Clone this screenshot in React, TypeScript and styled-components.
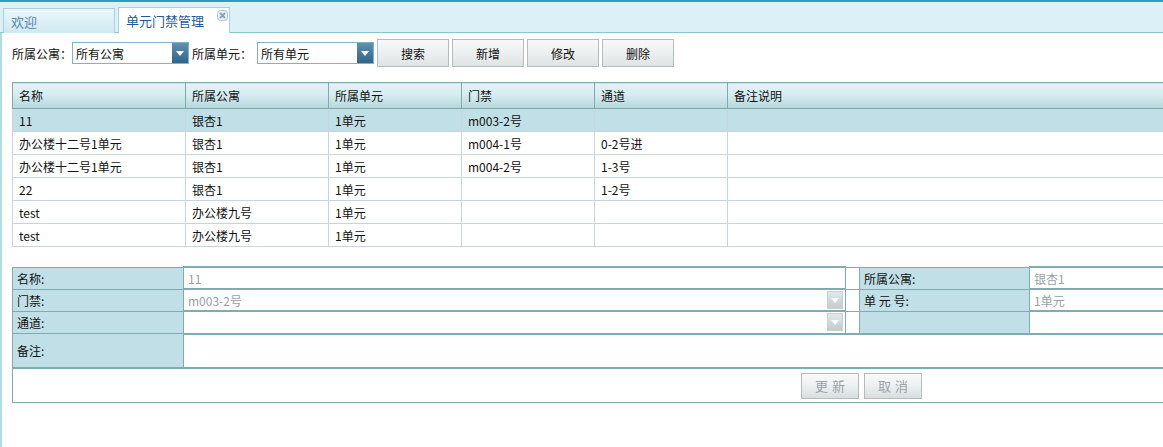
import React from "react";
import styled, { createGlobalStyle, css } from "styled-components";

const GlobalStyle = createGlobalStyle`
  html, body {
    margin: 0;
    padding: 0;
    background: #ffffff;
    overflow: hidden;
  }
  body {
    font-family: "Noto Sans CJK SC", "DejaVu Sans", sans-serif;
    font-size: 12px;
    color: #111;
  }
`;

const Root = styled.div`
  width: 1163px;
  height: 447px;
  overflow: hidden;
  border-top: 2px solid #2f9cc0;
  box-sizing: border-box;
`;

const TabStrip = styled.div`
  display: flex;
  align-items: flex-end;
  gap: 3px;
  height: 31px;
  padding-left: 3px;
  background: #dcf0f7;
  border-bottom: 1px solid #8ec4d0;
  box-sizing: border-box;
`;

const Tab = styled.div<{ active?: boolean }>`
  position: relative;
  width: 112px;
  height: 25px;
  box-sizing: border-box;
  padding: 5px 0 0 7px;
  border: 1px solid #a6d2dc;
  border-bottom: none;
  font-size: 13px;
  line-height: 16px;
  color: #5a86b0;
  background: linear-gradient(#eaf7fb, #cfe9f1);
  margin-bottom: -1px;
  ${(p) =>
    p.active &&
    css`
      height: 26px;
      background: #ffffff;
      color: #1f5a96;
    `}
`;

const CloseIcon = styled.svg`
  position: absolute;
  top: 2px;
  right: 1px;
`;

const Body = styled.div`
  border-left: 2px solid #b4dbe4;
  padding: 6px 0 0 10px;
  height: 420px;
  box-sizing: border-box;
`;

const Toolbar = styled.div`
  display: flex;
  align-items: center;
  height: 28px;
`;

const FilterLabel = styled.span<{ w: number }>`
  width: ${(p) => p.w}px;
  white-space: nowrap;
`;

const SelectBox = styled.div`
  display: flex;
  align-items: center;
  width: 117px;
  height: 22px;
  box-sizing: border-box;
  border: 1px solid #7fb3c4;
  margin-right: 3px;
  background: #fff;
`;

const SelectText = styled.span`
  flex: 1;
  padding-left: 3px;
`;

const SelectArrow = styled.span`
  display: flex;
  align-items: center;
  justify-content: center;
  width: 16px;
  height: 20px;
  background: linear-gradient(#5f91b0, #2f6588);
`;

const ToolButton = styled.button`
  width: 72px;
  height: 28px;
  margin-right: 3px;
  border: 1px solid #b4bcbe;
  background: linear-gradient(#f8fafa, #dfe4e4);
  font-family: inherit;
  font-size: 12px;
  color: #111;
  padding: 0;
`;

const GridTable = styled.table`
  margin-top: 15px;
  width: 1170px;
  border-collapse: collapse;
  table-layout: fixed;
  border: 1px solid #80aaaa;
`;

const HeadCell = styled.th`
  height: 25px;
  text-align: left;
  font-weight: normal;
  padding: 0 6px;
  background: linear-gradient(#e2f3f6 0%, #d6edf1 45%, #b4d7dd 100%);
  border: 1px solid #80aaaa;
  border-top: none;
`;

const Row = styled.tr<{ selected?: boolean }>`
  background: ${(p) => (p.selected ? "#c0dfe6" : "#ffffff")};
`;

const Cell = styled.td`
  height: 22px;
  padding: 0 6px;
  border: 1px solid #c6d6dc;
  white-space: nowrap;
  overflow: hidden;
`;

const FormTable = styled.table`
  margin-top: 19px;
  width: 1180px;
  border-collapse: collapse;
  table-layout: fixed;
  border: 1px solid #80acb0;
`;

const LabelCell = styled.td<{ tall?: boolean }>`
  height: ${(p) => (p.tall ? 33 : 21)}px;
  padding: 0 4px;
  background: #c0dfe6;
  border: 1px solid #80acb0;
  white-space: nowrap;
`;

const InputCell = styled.td`
  padding: 0;
  border: 1px solid #80acb0;
  border-top-width: 2px;
  border-bottom-width: 2px;
`;

const GapCell = styled.td`
  padding: 0;
  border-top: 1px solid #80acb0;
  border-bottom: 1px solid #80acb0;
`;

const Field = styled.div<{ tall?: boolean }>`
  display: flex;
  align-items: center;
  height: ${(p) => (p.tall ? 32 : 20)}px;
  padding-left: 4px;
  color: #9aa0a4;
  font-size: 12px;
`;

const FieldText = styled.span`
  flex: 1;
`;

const FieldArrow = styled.span`
  display: flex;
  align-items: center;
  justify-content: center;
  width: 14px;
  height: 16px;
  margin-right: 2px;
  background: linear-gradient(#e3e8ea, #c4cbce);
  border: 1px solid #c8d0d3;
`;

const ActionCell = styled.td`
  height: 33px;
  padding: 0;
  border-top: 2px solid #80acb0;
`;

const ActionBar = styled.div`
  display: flex;
  gap: 5px;
  padding-left: 788px;
`;

const ActionButton = styled.button`
  width: 58px;
  height: 26px;
  border: 1px solid #b4bcbe;
  background: linear-gradient(#f8fafa 0%, #f0f3f3 40%, #d8dede 100%);
  font-family: inherit;
  font-size: 13px;
  letter-spacing: 4px;
  padding: 0 0 0 4px;
  color: #9aa2a6;
`;

const Arrow: React.FC<{ color: string }> = ({ color }) => (
  <svg width="8" height="5" viewBox="0 0 8 5">
    <path d="M0 0h8L4 5z" fill={color} />
  </svg>
);

const columns = [
  { title: "名称", width: 173 },
  { title: "所属公寓", width: 143 },
  { title: "所属单元", width: 133 },
  { title: "门禁", width: 133 },
  { title: "通道", width: 133 },
  { title: "备注说明", width: undefined },
];

const rows = [
  ["11", "银杏1", "1单元", "m003-2号", "", ""],
  ["办公楼十二号1单元", "银杏1", "1单元", "m004-1号", "0-2号进", ""],
  ["办公楼十二号1单元", "银杏1", "1单元", "m004-2号", "1-3号", ""],
  ["22", "银杏1", "1单元", "", "1-2号", ""],
  ["test", "办公楼九号", "1单元", "", "", ""],
  ["test", "办公楼九号", "1单元", "", "", ""],
];

const App: React.FC = () => {
  return (
    <Root>
      <GlobalStyle />
      <TabStrip>
        <Tab>欢迎</Tab>
        <Tab active>
          单元门禁管理
          <CloseIcon width="11" height="11" viewBox="0 0 11 11">
            <rect x="0.5" y="0.5" width="10" height="10" rx="3" fill="#e8f1f4" stroke="#a8c4d0" />
            <path d="M3 3l5 5M8 3l-5 5" stroke="#8aa6b6" strokeWidth="2" />
          </CloseIcon>
        </Tab>
      </TabStrip>
      <Body>
        <Toolbar>
          <FilterLabel w={60}>所属公寓：</FilterLabel>
          <SelectBox>
            <SelectText>所有公寓</SelectText>
            <SelectArrow>
              <Arrow color="#ffffff" />
            </SelectArrow>
          </SelectBox>
          <FilterLabel w={65}>所属单元：</FilterLabel>
          <SelectBox>
            <SelectText>所有单元</SelectText>
            <SelectArrow>
              <Arrow color="#ffffff" />
            </SelectArrow>
          </SelectBox>
          <ToolButton>搜索</ToolButton>
          <ToolButton>新增</ToolButton>
          <ToolButton>修改</ToolButton>
          <ToolButton>删除</ToolButton>
        </Toolbar>

        <GridTable>
          <colgroup>
            {columns.map((c) => (
              <col key={c.title} style={c.width ? { width: c.width } : undefined} />
            ))}
          </colgroup>
          <thead>
            <tr>
              {columns.map((c) => (
                <HeadCell key={c.title}>{c.title}</HeadCell>
              ))}
            </tr>
          </thead>
          <tbody>
            {rows.map((r, i) => (
              <Row key={i} selected={i === 0}>
                {r.map((v, j) => (
                  <Cell key={j}>{v}</Cell>
                ))}
              </Row>
            ))}
          </tbody>
        </GridTable>

        <FormTable>
          <colgroup>
            <col style={{ width: 171 }} />
            <col style={{ width: 662 }} />
            <col style={{ width: 14 }} />
            <col style={{ width: 170 }} />
            <col />
          </colgroup>
          <tbody>
            <tr>
              <LabelCell>名称:</LabelCell>
              <InputCell>
                <Field>
                  <FieldText>11</FieldText>
                </Field>
              </InputCell>
              <GapCell />
              <LabelCell>所属公寓:</LabelCell>
              <InputCell>
                <Field>
                  <FieldText>银杏1</FieldText>
                </Field>
              </InputCell>
            </tr>
            <tr>
              <LabelCell>门禁:</LabelCell>
              <InputCell>
                <Field>
                  <FieldText>m003-2号</FieldText>
                  <FieldArrow>
                    <Arrow color="#ffffff" />
                  </FieldArrow>
                </Field>
              </InputCell>
              <GapCell />
              <LabelCell>单 元 号:</LabelCell>
              <InputCell>
                <Field>
                  <FieldText>1单元</FieldText>
                </Field>
              </InputCell>
            </tr>
            <tr>
              <LabelCell>通道:</LabelCell>
              <InputCell>
                <Field>
                  <FieldText />
                  <FieldArrow>
                    <Arrow color="#ffffff" />
                  </FieldArrow>
                </Field>
              </InputCell>
              <GapCell />
              <LabelCell />
              <InputCell>
                <Field />
              </InputCell>
            </tr>
            <tr>
              <LabelCell tall>备注:</LabelCell>
              <InputCell colSpan={4}>
                <Field tall />
              </InputCell>
            </tr>
            <tr>
              <ActionCell colSpan={5}>
                <ActionBar>
                  <ActionButton disabled>更新</ActionButton>
                  <ActionButton disabled>取消</ActionButton>
                </ActionBar>
              </ActionCell>
            </tr>
          </tbody>
        </FormTable>
      </Body>
    </Root>
  );
};

export default App;
